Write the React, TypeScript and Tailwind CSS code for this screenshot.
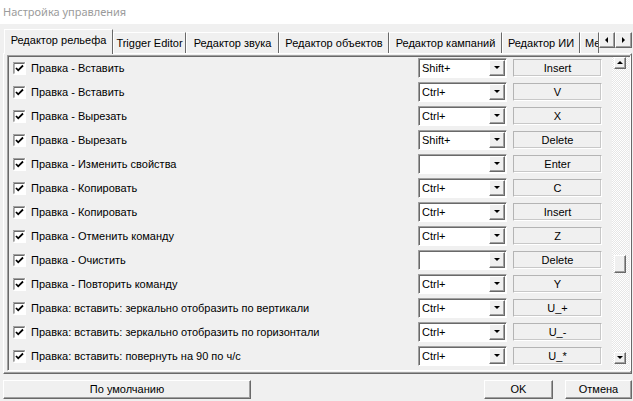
import React from "react";

type Row = { label: string; mod: string; key: string };

const rows: Row[] = [
  { label: "Правка - Вставить", mod: "Shift+", key: "Insert" },
  { label: "Правка - Вставить", mod: "Ctrl+", key: "V" },
  { label: "Правка - Вырезать", mod: "Ctrl+", key: "X" },
  { label: "Правка - Вырезать", mod: "Shift+", key: "Delete" },
  { label: "Правка - Изменить свойства", mod: "", key: "Enter" },
  { label: "Правка - Копировать", mod: "Ctrl+", key: "C" },
  { label: "Правка - Копировать", mod: "Ctrl+", key: "Insert" },
  { label: "Правка - Отменить команду", mod: "Ctrl+", key: "Z" },
  { label: "Правка - Очистить", mod: "", key: "Delete" },
  { label: "Правка - Повторить команду", mod: "Ctrl+", key: "Y" },
  { label: "Правка: вставить: зеркально отобразить по вертикали", mod: "Ctrl+", key: "U_+" },
  { label: "Правка: вставить: зеркально отобразить по горизонтали", mod: "Ctrl+", key: "U_-" },
  { label: "Правка: вставить: повернуть на 90 по ч/с", mod: "Ctrl+", key: "U_*" },
];

const tabs = [
  { label: "Trigger Editor", w: "w-[73px] justify-center" },
  { label: "Редактор звука", w: "w-[93px] justify-center" },
  { label: "Редактор объектов", w: "w-[110px] justify-center" },
  { label: "Редактор кампаний", w: "w-[113px] justify-center" },
  { label: "Редактор ИИ", w: "w-[78px] justify-center" },
  { label: "Ме", w: "w-[19px] justify-start pl-[4px]" },
];

const Checkbox = () => (
  <svg width="13" height="13" viewBox="0 0 13 13" className="shrink-0">
    <rect x="0" y="0" width="13" height="13" fill="#ffffff" />
    <path d="M0 12.5V0.5H12.5" stroke="#a0a0a0" fill="none" />
    <path d="M1 11.5V1.5H11.5" stroke="#696969" fill="none" />
    <path d="M0.5 12.5H12.5V0" stroke="#ffffff" fill="none" />
    <path d="M3 6 L5.2 8.3 L10 3.5" stroke="#000000" strokeWidth="1.8" fill="none" />
  </svg>
);

const Arrow = ({ dir }: { dir: "up" | "down" | "left" | "right" }) => {
  const pts = {
    up: "1,5 4,2 7,5",
    down: "1,2 4,5 7,2",
    left: "5,1 2,4 5,7",
    right: "2,1 5,4 2,7",
  }[dir];
  return (
    <svg width="8" height="8" viewBox="0 0 8 8">
      <polygon points={pts} fill="#000000" />
    </svg>
  );
};

const raised =
  "border border-t-white border-l-white border-b-[#696969] border-r-[#696969] shadow-[inset_-1px_-1px_0_#a0a0a0] bg-[#f0f0f0]";

const ShortcutRow = ({ row }: { row: Row }) => (
  <div className="flex h-[24px] shrink-0 items-center">
    <div className="ml-[5px]">
      <Checkbox />
    </div>
    <div className="ml-[5px] w-[387px] truncate text-black">{row.label}</div>
    <div className="flex h-[20px] w-[89px] items-center border border-t-[#a0a0a0] border-l-[#a0a0a0] border-b-white border-r-white bg-white shadow-[inset_1px_1px_0_#696969]">
      <span className="flex-1 pl-[3px] text-black">{row.mod}</span>
      <div className={`mr-[1px] flex h-[16px] w-[16px] items-center justify-center ${raised}`}>
        <Arrow dir="down" />
      </div>
    </div>
    <div className="ml-[6px] flex h-[18px] w-[89px] items-center justify-center border border-t-[#b4b4b4] border-l-[#b4b4b4] border-b-white border-r-white bg-[#f0f0f0] shadow-[inset_-1px_-1px_0_#c8c8c8] text-black">
      {row.key}
    </div>
  </div>
);

export default function App() {
  return (
    <div className="flex h-[401px] w-[633px] flex-col overflow-hidden bg-[#f0f0f0] text-[11px] font-['Liberation_Sans',Arial,sans-serif]">
      <div className="flex h-[24px] items-center bg-white pl-[3px] text-[11px] text-[#9b9b9b] font-['Noto_Sans',sans-serif]">
        Настройка управления
      </div>

      <div className="flex h-[29px] items-end pl-[4px]">
        <div className="relative z-10 -mb-px flex h-[25px] w-[109px] shrink-0 items-center justify-center border border-b-0 border-t-white border-l-white border-r-[#696969] bg-[#f0f0f0] pb-[3px] text-black">
          Редактор рельефа
        </div>
        <div className="flex w-[486px] overflow-hidden">
          {tabs.map((t) => (
            <div
              key={t.label}
              className={`flex h-[21px] shrink-0 items-center overflow-hidden border border-b-0 border-t-white border-l-white border-r-[#696969] pt-px text-black ${t.w}`}
            >
              {t.label}
            </div>
          ))}
        </div>
        <div className="mb-[5px] flex">
          <div className={`flex h-[16px] w-[16px] items-center justify-center ${raised}`}>
            <Arrow dir="left" />
          </div>
          <div className={`flex h-[16px] w-[17px] items-center justify-center ${raised}`}>
            <Arrow dir="right" />
          </div>
        </div>
      </div>

      <div className="ml-[3px] flex h-[321px] w-[629px] flex-col border border-t-white border-l-white border-b-[#696969] border-r-[#696969] shadow-[inset_-1px_-1px_0_#a0a0a0]">
        <div className="ml-[3px] mt-px flex h-[316px] w-[624px] border border-t-[#a0a0a0] border-l-[#a0a0a0] border-b-white border-r-white shadow-[inset_1px_1px_0_#696969]">
          <div className="flex flex-1 flex-col overflow-hidden">
            {rows.map((r, i) => (
              <ShortcutRow key={i} row={r} />
            ))}
          </div>
          <div className="mr-[1px] mt-[1px] flex w-[17px] flex-col bg-[repeating-conic-gradient(#ffffff_0%_25%,#e6e6e6_0%_50%)] bg-[length:2px_2px] pl-[2px] pr-[3px]">
            <div className={`flex h-[12px] w-[12px] items-center justify-center ${raised}`}>
              <Arrow dir="up" />
            </div>
            <div className="h-[186px]" />
            <div className={`h-[18px] w-[12px] ${raised}`} />
            <div className="flex-1" />
            <div className={`mb-[6px] flex h-[12px] w-[12px] items-center justify-center ${raised}`}>
              <Arrow dir="down" />
            </div>
          </div>
        </div>
      </div>

      <div className="mt-[6px] flex h-[19px] items-stretch leading-[13px]">
        <div className={`ml-[3px] flex w-[248px] items-center justify-center text-black ${raised}`}>
          По умолчанию
        </div>
        <div className={`ml-auto flex w-[69px] items-center justify-center text-black ${raised}`}>
          OK
        </div>
        <div className={`ml-[12px] mr-px flex w-[67px] items-center justify-center text-black ${raised}`}>
          Отмена
        </div>
      </div>
    </div>
  );
}
